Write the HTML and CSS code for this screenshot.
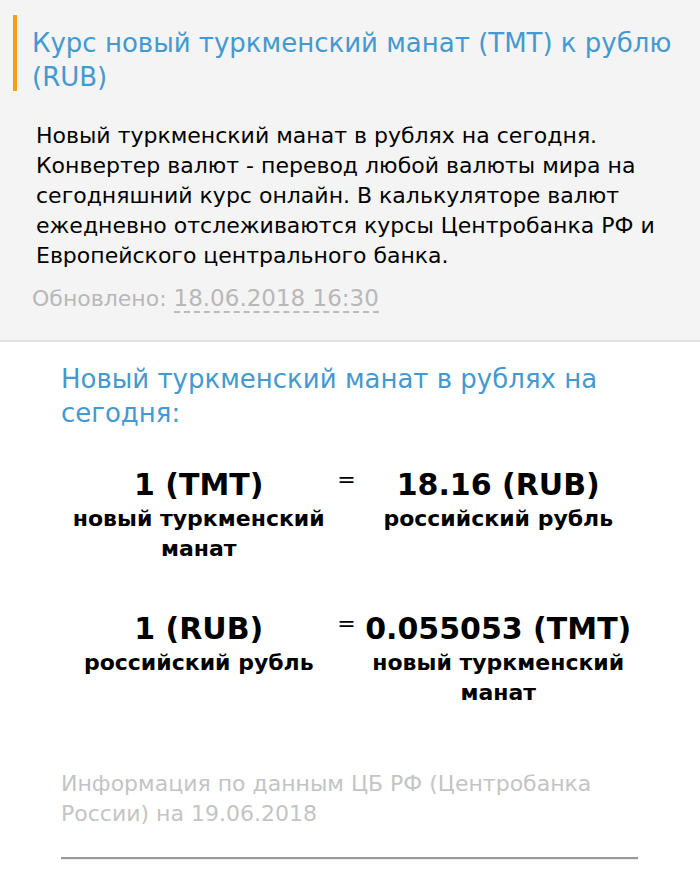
FILE: index.html
```html
<!DOCTYPE html>
<html lang="ru">

<head>
  <meta charset="UTF-8" />
  <meta name="viewport" content="width=device-width, initial-scale=1.0" />
  <title>Курс новый туркменский манат (TMT) к рублю (RUB)</title>
  <link rel="stylesheet" href="styles.css">
</head>

<body>
  <header class="intro">
    <h1>Курс новый туркменский манат (TMT) к рублю (RUB)</h1>
    <p class="description">Новый туркменский манат в рублях на сегодня. Конвертер валют - перевод любой валюты мира на сегодняшний курс онлайн. В калькуляторе валют ежедневно отслеживаются курсы Центробанка РФ и Европейского центрального банка.</p>
    <p class="updated">Обновлено: <time datetime="2018-06-18T16:30">18.06.2018 16:30</time></p>
  </header>

  <main class="content">
    <h2>Новый туркменский манат в рублях на сегодня:</h2>

    <table class="rates">
      <tr>
        <td class="currency"><strong>1 (TMT)</strong>новый туркменский манат</td>
        <td class="equals">=</td>
        <td class="currency"><strong>18.16 (RUB)</strong>российский рубль</td>
      </tr>
      <tr>
        <td class="currency"><strong>1 (RUB)</strong>российский рубль</td>
        <td class="equals">=</td>
        <td class="currency"><strong>0.055053 (TMT)</strong>новый туркменский манат</td>
      </tr>
    </table>

    <p class="source">Информация по данным ЦБ РФ (Центробанка России) на 19.06.2018</p>
    <hr />
  </main>
</body>

</html>
```

FILE: styles.css
```css
* {
  margin: 0;
  padding: 0;
  box-sizing: border-box;
}

body {
  background: #fff;
  color: #000;
  font-family: Verdana, "DejaVu Sans", sans-serif;
  font-size: 22px;
  line-height: 30px;
}

.intro {
  padding: 15px 13px 26px;
  background: #f4f4f4;
  border-bottom: 2px solid #e2e2e2;
}

h1,
h2 {
  color: #4499cf;
  font-size: 26px;
  font-weight: normal;
  line-height: 34px;
}

h1 {
  padding: 11px 0 0 19px;
  background: linear-gradient(#fb9e14, #fb9e14) no-repeat;
  background-size: 4px calc(100% - 3px);
}

.description {
  margin: 27px 20px 0 23px;
}

.updated {
  margin: 12px 0 0 19px;
  color: #b8b8b8;
}

.updated time {
  font-size: 23px;
  border-bottom: 2px dashed #bbb;
}

.content {
  padding: 20px 62px 26px 61px;
}

.rates {
  width: 100%;
  margin-top: 35px;
  padding-right: 2px;
  border-spacing: 0;
  table-layout: fixed;
}

.rates td {
  height: 144px;
  vertical-align: top;
  text-align: center;
}

.rates .currency {
  padding-top: 1px;
  font-weight: bold;
}

.currency strong {
  display: block;
  font-size: 30px;
  line-height: 38px;
  white-space: nowrap;
}

.rates .equals {
  width: 24px;
  padding-right: 4px;
}

.source {
  margin-top: 16px;
  color: #c4c4c4;
}

hr {
  margin-top: 28px;
  border: 0;
  border-top: 2px solid #999;
  border-bottom: 1px solid #eee;
}
```
